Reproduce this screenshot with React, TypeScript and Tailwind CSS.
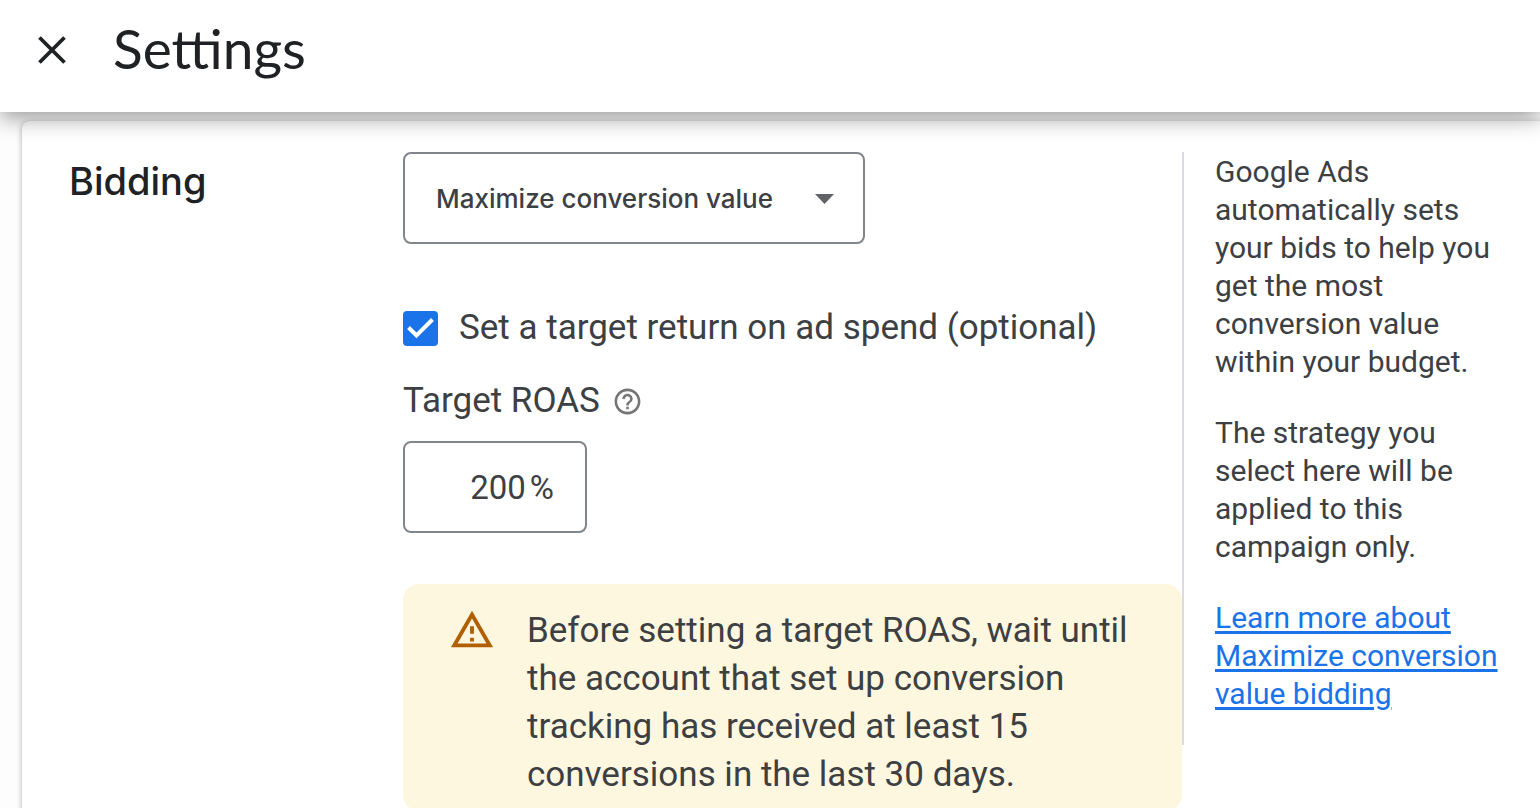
import { useState } from 'react';
import type { ReactNode } from 'react';
import { MdHelpOutline } from 'react-icons/md';

const strategies = [
  'Maximize conversion value',
  'Maximize conversions',
  'Maximize clicks',
  'Target impression share',
];

function Header() {
  return (
    <header className="relative z-10 flex h-28 shrink-0 items-center gap-[46px] bg-white px-[37px] pb-3 shadow-[0_5px_22px_rgba(0,0,0,0.42)]">
      <button type="button" aria-label="Close" className="text-[#202124]">
        <svg width="30" height="30" viewBox="0 0 30 30" fill="none" stroke="currentColor" strokeWidth="3.8">
          <path d="M2.5 2.5 27.5 27.5M27.5 2.5 2.5 27.5" />
        </svg>
      </button>
      <h1 className="pb-1 font-['Lato',sans-serif] text-[55px] leading-[64px] text-[#202124]">Settings</h1>
    </header>
  );
}

function StrategySelect() {
  const [strategy, setStrategy] = useState(strategies[0]);

  return (
    <div className="relative w-[462px] max-w-full">
      <select
        aria-label="Bid strategy"
        value={strategy}
        onChange={(e) => setStrategy(e.target.value)}
        className="h-[92px] w-full appearance-none rounded-lg border-2 border-[#80868b] bg-white pt-0.5 pr-16 pl-[31px] font-['Inter',sans-serif] text-[26px] font-medium text-[#3c4043]"
      >
        {strategies.map((name) => (
          <option key={name}>{name}</option>
        ))}
      </select>
      <svg
        className="pointer-events-none absolute right-[31px] top-[42px] fill-[#5f6368]"
        width="19"
        height="10"
        viewBox="0 0 19 10"
      >
        <path d="M0 0h19L9.5 10z" />
      </svg>
    </div>
  );
}

function TargetCheckbox({ checked, onChange }: { checked: boolean; onChange: (checked: boolean) => void }) {
  return (
    <label className="flex items-center gap-[21px]">
      <span className="relative size-[35px] shrink-0">
        <input
          type="checkbox"
          checked={checked}
          onChange={(e) => onChange(e.target.checked)}
          className="block size-full appearance-none rounded border-2 border-[#5f6368] checked:border-[#1a73e8] checked:bg-[#1a73e8]"
        />
        {checked && (
          <svg className="pointer-events-none absolute inset-0" viewBox="0 0 35 35" fill="none" stroke="#fff" strokeWidth="4">
            <path d="M5.5 16.5 13.5 24.5 29.5 8.5" />
          </svg>
        )}
      </span>
      Set a target return on ad spend (optional)
    </label>
  );
}

function Notice({ children }: { children: ReactNode }) {
  return (
    <div className="mt-[51px] flex gap-8 rounded-2xl bg-[#fef7e0] pt-[23px] pr-10 pb-3 pl-[46px] leading-[48px]">
      <svg className="size-[46px] shrink-0 fill-[#b06000]" viewBox="0 0 24 24" aria-hidden="true">
        <path d="M12 5.99 19.53 19H4.47L12 5.99M12 2 1 21h22L12 2zm1 14h-2v2h2v-2zm0-6h-2v4h2v-4z" />
      </svg>
      <p>{children}</p>
    </div>
  );
}

function HelpPanel() {
  return (
    <aside className="flex w-[358px] shrink-0 flex-col gap-[33px] self-start border-l-2 border-[#dadce0] pt-px pr-9 pb-8 pl-[31px] text-[30px] leading-[38px]">
      <p>Google Ads automatically sets your bids to help you get the most conversion value within your budget.</p>
      <p>The strategy you select here will be applied to this campaign only.</p>
      <a href="#maximize-conversion-value" className="text-[#1a73e8] underline decoration-[3px] underline-offset-[3px]">
        Learn more about Maximize conversion value bidding
      </a>
    </aside>
  );
}

export default function App() {
  const [useTarget, setUseTarget] = useState(true);
  const [roas, setRoas] = useState('200');

  return (
    <div className="flex h-screen flex-col overflow-hidden bg-[#fdfdfd] font-['Roboto',sans-serif] text-[#3c4043]">
      <Header />
      <main className="flex-1 pt-[9px] pl-[22px]">
        <section className="flex min-h-full rounded-tl-lg bg-white pt-[31px] pl-[47px] shadow-[0_1px_5px_1px_rgba(60,64,67,0.3)]">
          <h2 className="w-[334px] shrink-0 pt-1 font-['Inter',sans-serif] text-[38px] leading-[50px] font-medium text-[#202124]">
            Bidding
          </h2>

          <div className="min-w-0 flex-1 text-[35px] leading-[48px]">
            <StrategySelect />

            <div className="mt-[60px]">
              <TargetCheckbox checked={useTarget} onChange={setUseTarget} />
            </div>

            {useTarget && (
              <>
                <div className="mt-[25px] flex items-center gap-3">
                  <label htmlFor="target-roas">Target ROAS</label>
                  <button type="button" aria-label="About target ROAS" className="text-[#757575]">
                    <MdHelpOutline className="size-[31px]" />
                  </button>
                </div>
                <div className="mt-4 flex h-[92px] w-[184px] items-center gap-1 rounded-lg border-2 border-[#80868b] pt-0.5 pr-[31px] text-[33px]">
                  <input
                    id="target-roas"
                    type="text"
                    inputMode="numeric"
                    value={roas}
                    onChange={(e) => setRoas(e.target.value)}
                    className="min-w-0 flex-1 bg-transparent text-right outline-none"
                  />
                  <span>%</span>
                </div>
              </>
            )}

            <Notice>
              Before setting a target ROAS, wait until the account that set up conversion tracking has received at
              least 15 conversions in the last 30 days.
            </Notice>
          </div>

          <HelpPanel />
        </section>
      </main>
    </div>
  );
}
